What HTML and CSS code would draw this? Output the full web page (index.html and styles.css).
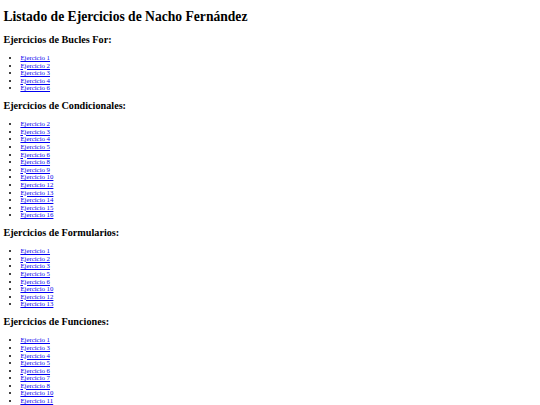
FILE: index.html
```html
<!DOCTYPE html>
<html lang="es">
<head>
<meta charset="utf-8">
<title>Listado de Ejercicios</title>
<link rel="stylesheet" href="styles.css">
</head>
<body class="page">
<h1 class="title">Listado de Ejercicios de Nacho Fernández</h1>

<h2 class="section">Ejercicios de Bucles For:</h2>
<ul class="list">
<li><a class="link" href="#">Ejercicio 1</a></li>
<li><a class="link" href="#">Ejercicio 2</a></li>
<li><a class="link" href="#">Ejercicio 3</a></li>
<li><a class="link" href="#">Ejercicio 4</a></li>
<li><a class="link" href="#">Ejercicio 6</a></li>
</ul>

<h2 class="section">Ejercicios de Condicionales:</h2>
<ul class="list">
<li><a class="link" href="#">Ejercicio 2</a></li>
<li><a class="link" href="#">Ejercicio 3</a></li>
<li><a class="link" href="#">Ejercicio 4</a></li>
<li><a class="link" href="#">Ejercicio 5</a></li>
<li><a class="link" href="#">Ejercicio 6</a></li>
<li><a class="link" href="#">Ejercicio 8</a></li>
<li><a class="link" href="#">Ejercicio 9</a></li>
<li><a class="link" href="#">Ejercicio 10</a></li>
<li><a class="link" href="#">Ejercicio 12</a></li>
<li><a class="link" href="#">Ejercicio 13</a></li>
<li><a class="link" href="#">Ejercicio 14</a></li>
<li><a class="link" href="#">Ejercicio 15</a></li>
<li><a class="link" href="#">Ejercicio 16</a></li>
</ul>

<h2 class="section">Ejercicios de Formularios:</h2>
<ul class="list">
<li><a class="link" href="#">Ejercicio 1</a></li>
<li><a class="link" href="#">Ejercicio 2</a></li>
<li><a class="link" href="#">Ejercicio 3</a></li>
<li><a class="link" href="#">Ejercicio 5</a></li>
<li><a class="link" href="#">Ejercicio 6</a></li>
<li><a class="link" href="#">Ejercicio 10</a></li>
<li><a class="link" href="#">Ejercicio 12</a></li>
<li><a class="link" href="#">Ejercicio 13</a></li>
</ul>

<h2 class="section">Ejercicios de Funciones:</h2>
<ul class="list">
<li><a class="link" href="#">Ejercicio 1</a></li>
<li><a class="link" href="#">Ejercicio 3</a></li>
<li><a class="link" href="#">Ejercicio 4</a></li>
<li><a class="link" href="#">Ejercicio 5</a></li>
<li><a class="link" href="#">Ejercicio 6</a></li>
<li><a class="link" href="#">Ejercicio 7</a></li>
<li><a class="link" href="#">Ejercicio 8</a></li>
<li><a class="link" href="#">Ejercicio 10</a></li>
<li><a class="link" href="#">Ejercicio 11</a></li>
</ul>
</body>
</html>
```

FILE: styles.css
```css
html {
  background: #fff;
}
.page {
  margin: 3.4px;
  font-family: "Liberation Serif", "Times New Roman", serif;
  font-size: 6.8px;
  color: #000;
}
.title {
  font-size: 13.6px;
  line-height: 15.6px;
  margin: 6px 0 9px;
  font-weight: bold;
}
.section {
  font-size: 10.2px;
  line-height: 11.7px;
  margin: 8.3px 0;
  font-weight: bold;
}
.list {
  margin: 6.8px 0;
  padding-left: 17px;
  list-style: disc;
}
.list li {
  line-height: 7.6px;
}
.link {
  color: #0000ee;
  text-decoration: underline;
}
```
